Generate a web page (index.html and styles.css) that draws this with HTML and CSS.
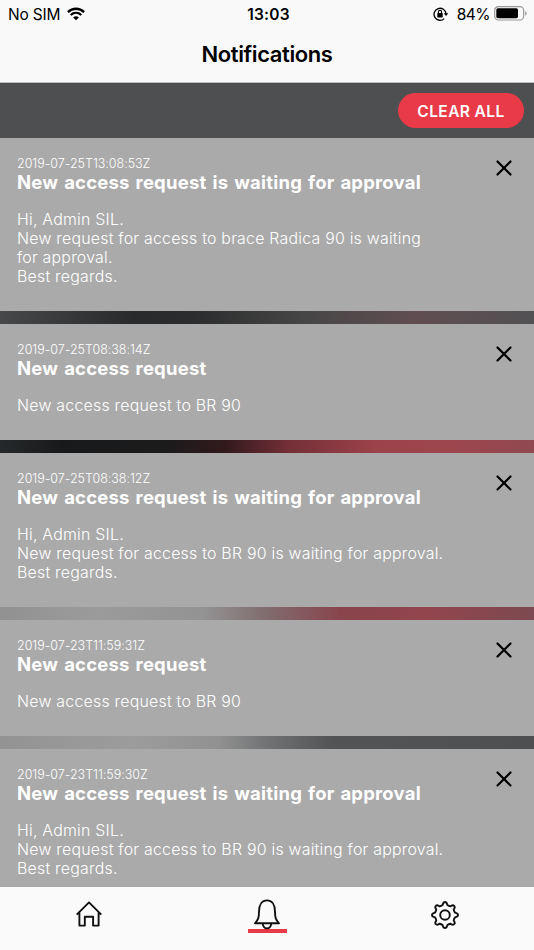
FILE: index.html
```html
<!DOCTYPE html>
<html lang="en">
<head>
<meta charset="utf-8">
<title>Notifications</title>
<link rel="stylesheet" href="styles.css">
</head>
<body>
<div class="screen">
  <header class="header">
    <div class="status">
      <div class="status-left">
        <span class="carrier">No SIM</span>
        <svg class="wifi" width="18" height="14" viewBox="0 0 18 14" fill="none" stroke="#000" stroke-width="2.3"><path d="M.9 5.1C5.6.6 12.4.6 17.1 5.1M3.7 8C6.8 5.1 11.2 5.1 14.3 8"/><path d="M9 13.3 6.1 10.4Q9 8.1 11.9 10.4Z" fill="#000" stroke="none"/></svg>
      </div>
      <time class="clock">13:03</time>
      <div class="status-right">
        <svg class="lock" width="16" height="14" viewBox="0 0 16 14" fill="none" stroke="#000"><path d="M11.2 11.6A6 6 0 1 1 13 6.8" stroke-width="1.3"/><path d="M10.7 6.2h4.6L13 9.1Z" fill="#000" stroke="none"/><rect x="4.3" y="6.1" width="5.4" height="4.3" rx=".6" fill="#000" stroke="none"/><path d="M5.4 6.2V5a1.6 1.6 0 0 1 3.2 0v1.2" stroke-width="1.1"/></svg>
        <span class="percent">84%</span>
        <svg class="battery" width="34" height="15" viewBox="0 0 34 15"><rect x=".7" y=".7" width="28.9" height="13.3" rx="3.6" fill="none" stroke="#999" stroke-width="1.2"/><rect x="2.3" y="2.3" width="21.7" height="10" rx="1.7"/><path d="M31.2 5v4.8q1.5-.7 1.5-2.4T31.2 5Z" fill="#999"/></svg>
      </div>
    </div>
    <h1 class="heading">Notifications</h1>
  </header>
  <div class="toolbar"><button class="clear">CLEAR ALL</button></div>
  <main class="list">
    <article class="card">
      <div class="text">
        <time class="date">2019-07-25T13:08:53Z</time>
        <h2 class="title">New access request is waiting for approval</h2>
        <p class="message">Hi, Admin SIL.<br>New request for access to brace Radica 90 is waiting<br>for approval.<br>Best regards.</p>
      </div>
      <svg class="close" viewBox="0 0 16 16"><path d="M1.5 1.5l13 13M14.5 1.5l-13 13"/></svg>
    </article>
    <div class="gap gap-slate"></div>
    <article class="card">
      <div class="text">
        <time class="date">2019-07-25T08:38:14Z</time>
        <h2 class="title">New access request</h2>
        <p class="message">New access request to BR 90</p>
      </div>
      <svg class="close" viewBox="0 0 16 16"><path d="M1.5 1.5l13 13M14.5 1.5l-13 13"/></svg>
    </article>
    <div class="gap gap-dark"></div>
    <article class="card">
      <div class="text">
        <time class="date">2019-07-25T08:38:12Z</time>
        <h2 class="title">New access request is waiting for approval</h2>
        <p class="message">Hi, Admin SIL.<br>New request for access to BR 90 is waiting for approval.<br>Best regards.</p>
      </div>
      <svg class="close" viewBox="0 0 16 16"><path d="M1.5 1.5l13 13M14.5 1.5l-13 13"/></svg>
    </article>
    <div class="gap gap-rose"></div>
    <article class="card">
      <div class="text">
        <time class="date">2019-07-23T11:59:31Z</time>
        <h2 class="title">New access request</h2>
        <p class="message">New access request to BR 90</p>
      </div>
      <svg class="close" viewBox="0 0 16 16"><path d="M1.5 1.5l13 13M14.5 1.5l-13 13"/></svg>
    </article>
    <div class="gap gap-gray"></div>
    <article class="card">
      <div class="text">
        <time class="date">2019-07-23T11:59:30Z</time>
        <h2 class="title">New access request is waiting for approval</h2>
        <p class="message">Hi, Admin SIL.<br>New request for access to BR 90 is waiting for approval.<br>Best regards.</p>
      </div>
      <svg class="close" viewBox="0 0 16 16"><path d="M1.5 1.5l13 13M14.5 1.5l-13 13"/></svg>
    </article>
  </main>
  <nav class="tabs">
    <a class="tab"><svg class="home" width="28" height="28" viewBox="0 0 28 28"><path d="M1.7 14.6 14 2.4l12.3 12.2M4.4 12.4v13.2h5.4v-8.8h8.3v8.8h5.5V12.4"/></svg></a>
    <a class="tab tab-active"><svg class="bell" width="28" height="32" viewBox="0 0 28 32"><path d="M2 25.3c3-3.400 4-5.200 4-11.500C6 6.300 9.300 2.400 14 2.400s8 3.900 8 11.400c0 6.300 1 8.100 4 11.500ZM9.700 25.500c.4 3.300 2 4.900 4.300 4.900s3.900-1.600 4.300-4.900"/></svg></a>
    <a class="tab"><svg class="gear" width="30" height="30" viewBox="-15 -15 30 30"><circle r="4.8"/><path d="M-2.400-10C-2-11-2-13 0-13S2-11 2.400-10Q3.800-9 5.400-8.700C6.400-9.200 7.800-10.600 9.200-9.200S9.200-6.400 8.700-5.400Q9-3.800 10-2.400C11-2 13-2 13 0S11 2 10 2.400Q9 3.800 8.700 5.400C9.200 6.400 10.600 7.800 9.200 9.200S6.400 9.200 5.400 8.700Q3.800 9 2.400 10C2 11 2 13 0 13S-2 11-2.400 10Q-3.800 9-5.400 8.700C-6.400 9.200-7.800 10.600-9.200 9.200S-9.200 6.400-8.700 5.400Q-9 3.800-10 2.400C-11 2-13 2-13 0S-11-2-10-2.400Q-9-3.800-8.700-5.400C-9.200-6.400-10.600-7.800-9.200-9.200S-6.400-9.200-5.400-8.700Q-3.800-9-2.400-10Z"/></svg></a>
  </nav>
</div>
</body>
</html>
```
FILE: styles.css
```css
* { box-sizing: border-box; }
body { margin: 0; font-family: Inter, "Liberation Sans", sans-serif; color: #000; }
h1, h2, p { margin: 0; }
.screen { width: 534px; height: 950px; display: flex; flex-direction: column; overflow: hidden; background: #aaa; }
.header { height: 83px; flex: none; background: #f9f9f9; border-bottom: 1px solid #bcbcbc; }
.status { height: 27px; display: grid; grid-template-columns: 1fr auto 1fr; align-items: center; padding: 0 6px 0 8px; }
.status-left, .status-right { display: flex; align-items: center; }
.status-right { justify-content: flex-end; }
.carrier, .percent { font-size: 15.5px; line-height: 19px; padding-top: 1px; letter-spacing: -.2px; }
.percent { letter-spacing: -.5px; }
.wifi { margin-left: 7px; }
.clock { font-size: 15.5px; line-height: 19px; padding: 1px 0 0 1px; font-weight: 600; letter-spacing: .2px; }
.lock { margin-right: 8px; }
.battery { margin-left: 4px; }
.heading { font-size: 22px; line-height: 55px; font-weight: 600; text-align: center; letter-spacing: -.4px; }
.toolbar { height: 55px; flex: none; display: flex; justify-content: flex-end; align-items: center; padding-right: 10px; background: #4e4f51; }
.clear { width: 126px; height: 35px; padding: 1px 0 0; border: 0; border-radius: 18px; background: #e93a48; color: #fff; font: 600 15.5px Inter, "Liberation Sans", sans-serif; letter-spacing: .4px; }
.list { flex: 1; min-height: 0; overflow: hidden; }
.card { display: flex; justify-content: space-between; align-items: flex-start; padding: 18px 22px 25px 17px; background: #aaa; color: #fff; }
.text { white-space: nowrap; }
.date { display: block; font-size: 12.5px; line-height: 15px; font-weight: 350; letter-spacing: -.03px; }
.title { font-size: 18.5px; line-height: 23px; font-weight: 700; letter-spacing: .2px; word-spacing: 1.4px; }
.message { margin-top: 16px; font-size: 15.9px; line-height: 19px; font-weight: 350; letter-spacing: .23px; }
.close { width: 16px; height: 16px; margin-top: 3.5px; fill: none; stroke: #000; stroke-width: 2.2; stroke-linecap: round; }
.gap { height: 13px; }
.gap-slate { background: linear-gradient(90deg, #46484a, #292a2b 25%, #2b2c2d 36%, #464646 57%, #604d51 78%, #515153); }
.gap-dark { background: linear-gradient(90deg, #25282a, #18191a 12%, #1b1b1c 31%, #31191c 42%, #742f37 54%, #9b424a 70%, #9e464e 84%, #904850); }
.gap-rose { background: linear-gradient(90deg, #919191, #9b9b9b 18%, #939393 38%, #806c6e 50%, #89444c 64%, #93454e 80%, #7c4a50); }
.gap-gray { background: linear-gradient(90deg, #939393, #9c9c9c 25%, #919191 41%, #707273 50%, #525456 62%, #4e4f51); }
.tabs { height: 63px; flex: none; display: grid; grid-template-columns: repeat(3, 1fr); background: #fafafa; }
.tab { position: relative; display: flex; justify-content: center; }
.tab svg { fill: none; stroke: #111; stroke-width: 1.9; stroke-linejoin: round; }
.home { margin-top: 13px; }
.bell { margin-top: 11px; }
.gear { margin-top: 13px; }
.tab-active::before { content: ""; position: absolute; top: 42px; width: 39px; height: 4px; background: #e93a48; }
.tab-active svg { position: relative; }
```
